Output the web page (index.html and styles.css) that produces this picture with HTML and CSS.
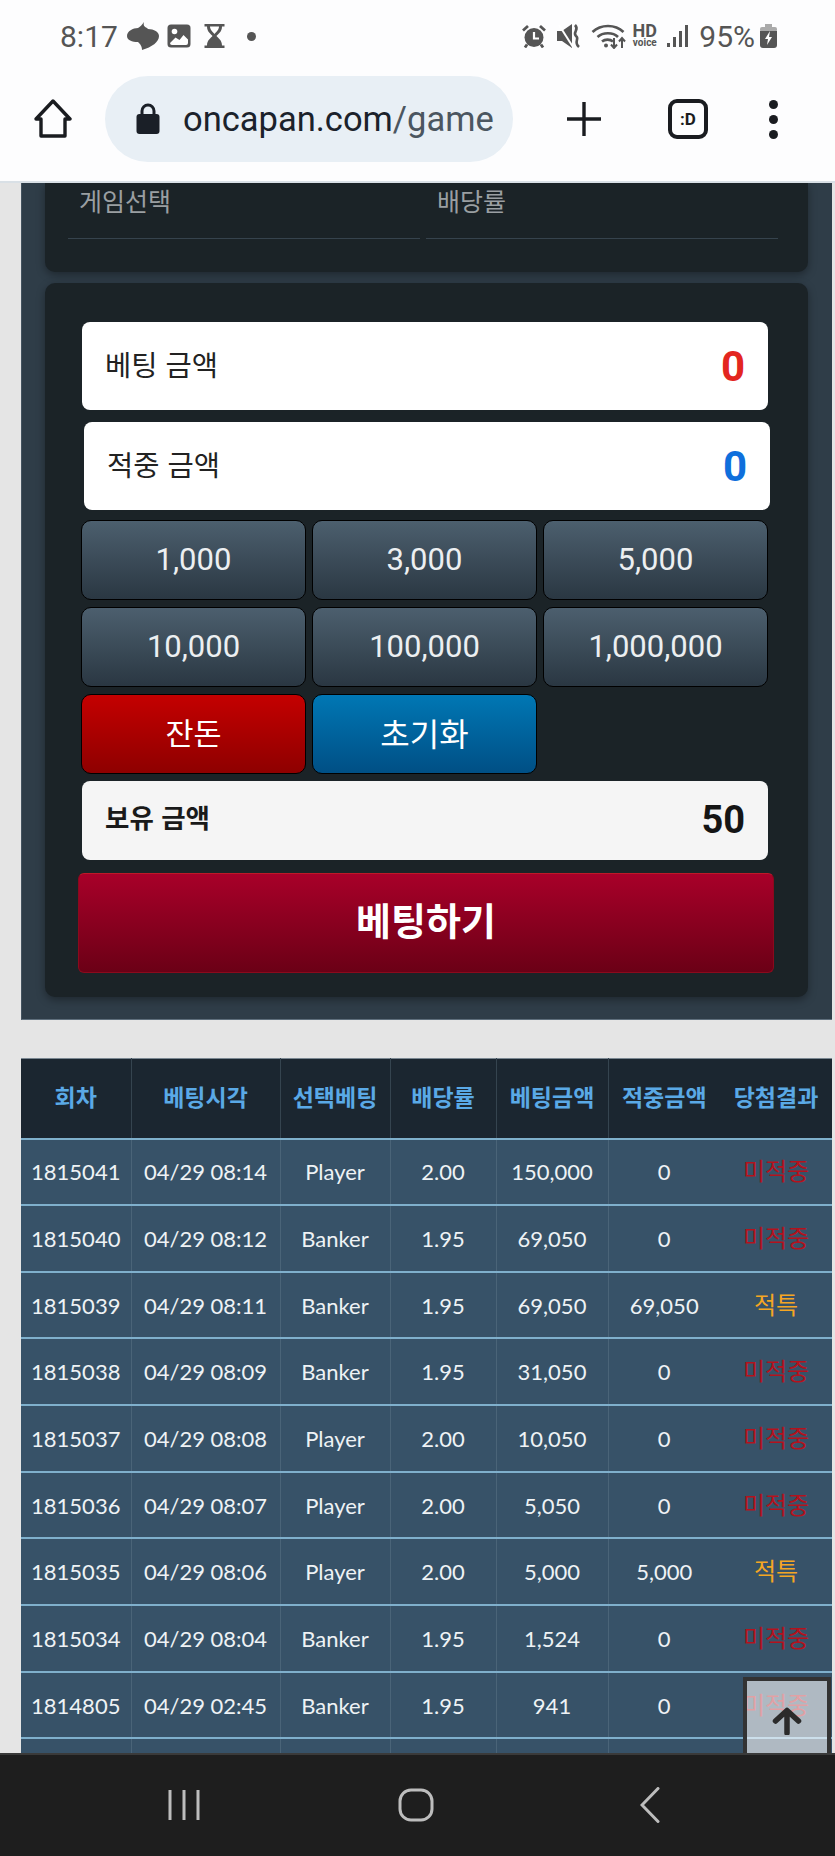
FILE: index.html
```html
<!DOCTYPE html>
<html lang="ko">
<head>
  <meta charset="UTF-8" />
  <meta name="viewport" content="width=device-width, initial-scale=1.0" />
  <title>oncapan.com/game</title>
  <link rel="stylesheet" href="styles.css">
</head>
<body>
  <div class="phone">
    <!-- Status bar -->
    <div class="status-bar">
      <div class="status-left">
        <span class="clock">8:17</span>
        <svg class="ico-talk" viewBox="0 0 32 28"><path d="M17 0 C16 3 17 5 20 6 L21 7 C27 7 32 10 32 14 C32 20 25 25 15 28 C15 25 14 23 12 21 L11 20 C5 20 0 18 0 14 C0 9 6 6 11 6 C13 5 15 3 17 0 Z" fill="#555"/></svg>
        <svg class="ico-img" viewBox="0 0 24 24"><rect x="0.500" y="0.500" width="23" height="23" rx="3.500" fill="#555"/><path d="M3 19 L8.500 13.500 L12.500 16 L16.500 11 L21 15.500 V19 Q21 21 19 21 H5 Q3 21 3 19 Z" fill="#fff"/><circle cx="7.500" cy="7.500" r="2.800" fill="#fff"/></svg>
        <svg class="ico-glass" viewBox="0 0 20 24"><path d="M0 0 H20 V2.500 H17.500 C17.500 8 13.500 10 12 12 C13.500 14 17.500 16 17.500 21.500 H20 V24 H0 V21.500 H2.500 C2.500 16 6.500 14 8 12 C6.500 10 2.500 8 2.500 2.500 H0 Z" fill="#555"/><path d="M5.500 2.500 H14.500 C14.500 6 11.500 8 10 10 C8.500 8 5.500 6 5.500 2.500 Z" fill="#fff"/></svg>
        <span class="dot"></span>
      </div>
      <div class="status-right">
        <svg class="ico-alarm" viewBox="0 0 24 24"><circle cx="12" cy="13.500" r="9.500" fill="#555"/><path d="M12 8 V14.500 H17" fill="none" stroke="#fff" stroke-width="2.200"/><path d="M1 6.500 L6 2 M23 6.500 L18 2 M5 20.500 L3 23.500 M19 20.500 L21 23.500" stroke="#555" stroke-width="2.800" fill="none"/></svg>
        <svg class="ico-mute" viewBox="0 0 24 24"><path d="M0 7 H5 L15 0 V24 L5 17 H0 Z" fill="#555"/><path d="M2 1 L16 23" stroke="#fff" stroke-width="2"/><path d="M18 1 C23 6 15 8 19 12 C23 15 16 18 22 23" fill="none" stroke="#555" stroke-width="2.600"/></svg>
        <svg class="ico-wifi" viewBox="0 0 36 26"><path d="M1.500 9 C10 1 24 1 32.500 9 M6.500 14 C12 9 22 9 27 14 M11 18.500 C14 16 19 16 22 18.500" fill="none" stroke="#555" stroke-width="2.600"/><circle cx="15" cy="22.500" r="2" fill="#555"/><path d="M23 15 V25 M20 21.500 L23 25 L26 21.500 M31 25 V15 M28 18.500 L31 15 L34 18.500" fill="none" stroke="#555" stroke-width="2"/></svg>
        <div class="hd"><span class="hd-top">HD</span><span class="hd-sub">voice</span></div>
        <svg class="ico-signal" viewBox="0 0 22 24"><rect x="0" y="19" width="3" height="4" fill="#555"/><rect x="6" y="13" width="3" height="10" fill="#555"/><rect x="12" y="7" width="3" height="16" fill="#555"/><rect x="18" y="1" width="3" height="22" fill="#555"/></svg>
        <span class="batt-text">95%</span>
        <svg class="ico-batt" viewBox="0 0 17 24"><rect x="5" y="0" width="7" height="3" fill="#aaa"/><rect x="0" y="3" width="17" height="5" rx="2" fill="#aaa"/><path d="M0 7 H17 V21 Q17 24 14 24 H3 Q0 24 0 21 Z" fill="#555"/><path d="M10 7 L5 15 H8 L7 21 L12 13 H9 Z" fill="#fff"/></svg>
      </div>
    </div>

    <!-- Browser toolbar -->
    <div class="toolbar">
      <svg class="ico-home" viewBox="0 0 40 40"><path d="M20 2 L37 20 H32 V37 H8 V20 H3 Z" fill="none" stroke="#1a1c20" stroke-width="3.400" stroke-linejoin="round"/></svg>
      <div class="url-pill">
        <svg class="ico-lock" viewBox="0 0 24 32"><rect x="0.500" y="11" width="23" height="20" rx="3" fill="#1a1f27"/><path d="M6 12 V8 A6 6 0 0 1 18 8 V12" fill="none" stroke="#1a1f27" stroke-width="3"/></svg>
        <span class="url-text">oncapan.com<span class="url-path">/game</span></span>
      </div>
      <svg class="ico-plus" viewBox="0 0 36 36"><path d="M18 1 V35 M1 18 H35" stroke="#1a1c20" stroke-width="3.400" fill="none"/></svg>
      <div class="tab-count">:D</div>
      <div class="menu-dots"><span></span><span></span><span></span></div>
    </div>

    <!-- Page -->
    <div class="content">
      <div class="panel">
        <div class="card card-top">
          <div class="field"><span class="field-label">게임선택</span></div>
          <div class="field"><span class="field-label">배당률</span></div>
        </div>

        <div class="card card-bet">
          <div class="amount-box">
            <span class="amount-label">베팅 금액</span>
            <span class="amount-value red">0</span>
          </div>
          <div class="amount-box amount-win">
            <span class="amount-label">적중 금액</span>
            <span class="amount-value blue">0</span>
          </div>

          <div class="chips">
            <button class="chip">1,000</button>
            <button class="chip">3,000</button>
            <button class="chip">5,000</button>
            <button class="chip">10,000</button>
            <button class="chip">100,000</button>
            <button class="chip">1,000,000</button>
            <button class="chip chip-red">잔돈</button>
            <button class="chip chip-blue">초기화</button>
          </div>

          <div class="balance-box">
            <span class="balance-label">보유 금액</span>
            <span class="balance-value">50</span>
          </div>
          <button class="bet-btn">베팅하기</button>
        </div>
      </div>

      <table class="history">
        <thead>
          <tr>
            <th>회차</th><th>베팅시각</th><th>선택베팅</th><th>배당률</th><th>베팅금액</th><th>적중금액</th><th>당첨결과</th>
          </tr>
        </thead>
        <tbody>
          <tr><td>1815041</td><td>04/29 08:14</td><td>Player</td><td>2.00</td><td>150,000</td><td>0</td><td class="lose">미적중</td></tr>
          <tr><td>1815040</td><td>04/29 08:12</td><td>Banker</td><td>1.95</td><td>69,050</td><td>0</td><td class="lose">미적중</td></tr>
          <tr><td>1815039</td><td>04/29 08:11</td><td>Banker</td><td>1.95</td><td>69,050</td><td>69,050</td><td class="win">적특</td></tr>
          <tr><td>1815038</td><td>04/29 08:09</td><td>Banker</td><td>1.95</td><td>31,050</td><td>0</td><td class="lose">미적중</td></tr>
          <tr><td>1815037</td><td>04/29 08:08</td><td>Player</td><td>2.00</td><td>10,050</td><td>0</td><td class="lose">미적중</td></tr>
          <tr><td>1815036</td><td>04/29 08:07</td><td>Player</td><td>2.00</td><td>5,050</td><td>0</td><td class="lose">미적중</td></tr>
          <tr><td>1815035</td><td>04/29 08:06</td><td>Player</td><td>2.00</td><td>5,000</td><td>5,000</td><td class="win">적특</td></tr>
          <tr><td>1815034</td><td>04/29 08:04</td><td>Banker</td><td>1.95</td><td>1,524</td><td>0</td><td class="lose">미적중</td></tr>
          <tr><td>1814805</td><td>04/29 02:45</td><td>Banker</td><td>1.95</td><td>941</td><td>0</td><td class="lose">미적중</td></tr>
          <tr><td></td><td></td><td></td><td></td><td></td><td></td><td></td></tr>
        </tbody>
      </table>

      <!-- Back to top -->
      <div class="to-top">
        <svg viewBox="0 0 30 28"><path d="M15 26 V4 M3.500 14 L15 3.500 L26.500 14" fill="none" stroke="#2b2b2b" stroke-width="5.500" stroke-linecap="round" stroke-linejoin="round"/></svg>
      </div>
    </div>

    <!-- Android nav bar -->
    <div class="nav-bar">
      <svg class="nav-ico nav-recent" viewBox="0 0 34 32"><path d="M3 1 V31 M17 1 V31 M31 1 V31" stroke="#bdbdbd" stroke-width="3" fill="none"/></svg>
      <svg class="nav-ico nav-home" viewBox="0 0 36 34"><rect x="2" y="2" width="32" height="30" rx="11" fill="none" stroke="#bdbdbd" stroke-width="3"/></svg>
      <svg class="nav-ico nav-back" viewBox="0 0 20 36"><path d="M18 1.500 L2 18 L18 34.500" stroke="#bdbdbd" stroke-width="3" fill="none" stroke-linecap="round"/></svg>
    </div>
  </div>
</body>
</html>
```

FILE: styles.css
```css
/* General styles */
* {
  box-sizing: border-box;
}
body {
  margin: 0;
  font-family: "Lato", "Noto Sans CJK KR", sans-serif;
  background-color: #e5e5e5;
}
button {
  font-family: inherit;
}
.phone {
  display: flex;
  flex-direction: column;
  width: 835px;
  height: 1856px;
  overflow: hidden;
}

/* Status bar */
.status-bar {
  display: flex;
  justify-content: space-between;
  align-items: center;
  height: 72px;
  padding: 0 58px 0 60px;
  background-color: #fdfdfe;
  color: #555;
  flex-shrink: 0;
}
.status-left,
.status-right {
  display: flex;
  align-items: center;
}
.clock,
.batt-text {
  font-family: "Roboto", sans-serif;
  font-size: 30px;
}
.ico-talk {
  width: 32px;
  height: 28px;
  margin-left: 9px;
}
.ico-img {
  width: 24px;
  height: 24px;
  margin-left: 8px;
}
.ico-glass {
  width: 21px;
  height: 24px;
  margin-left: 13px;
}
.dot {
  width: 9px;
  height: 9px;
  margin-left: 22px;
  border-radius: 50%;
  background-color: #555;
}
.ico-alarm,
.ico-mute {
  width: 24px;
  height: 24px;
}
.ico-mute {
  margin-left: 11px;
}
.ico-wifi {
  width: 36px;
  height: 26px;
  margin-left: 10px;
}
.hd {
  display: flex;
  flex-direction: column;
  align-items: center;
  width: 25px;
  margin-left: 5px;
  font-family: "Roboto", sans-serif;
  font-weight: 700;
  line-height: 1;
}
.hd-top {
  font-size: 18px;
  line-height: 14px;
}
.hd-sub {
  font-size: 10px;
  line-height: 10px;
}
.ico-signal {
  width: 22px;
  height: 24px;
  margin-left: 10px;
}
.batt-text {
  margin-left: 10px;
}
.ico-batt {
  width: 17px;
  height: 24px;
  margin-left: 5px;
}

/* Browser toolbar */
.toolbar {
  display: flex;
  align-items: center;
  height: 111px;
  padding: 0 0 15px 33px;
  background-color: #fdfdfe;
  border-bottom: 2px solid #d9e0e6;
  flex-shrink: 0;
}
.ico-home {
  width: 40px;
  height: 40px;
}
.url-pill {
  display: flex;
  align-items: center;
  width: 408px;
  height: 86px;
  margin-left: 32px;
  padding-left: 31px;
  border-radius: 43px;
  background-color: #e8eff5;
}
.ico-lock {
  width: 24px;
  height: 32px;
}
.url-text {
  margin-left: 23px;
  font-family: "Roboto", sans-serif;
  font-size: 34.500px;
  white-space: nowrap;
  color: #1b222b;
}
.url-path {
  color: #4b5660;
}
.ico-plus {
  width: 36px;
  height: 36px;
  margin-left: 53px;
}
.tab-count {
  display: flex;
  align-items: center;
  justify-content: center;
  width: 40px;
  height: 40px;
  margin-left: 66px;
  border: 4px solid #1a1c20;
  border-radius: 9px;
  font-family: "Roboto", sans-serif;
  font-size: 17px;
  font-weight: 700;
  color: #1a1c20;
}
.menu-dots {
  display: flex;
  flex-direction: column;
  gap: 6px;
  margin-left: 61px;
}
.menu-dots span {
  width: 9px;
  height: 9px;
  border-radius: 50%;
  background-color: #1a1c20;
}

/* Page */
.content {
  position: relative;
  flex: 1;
  overflow: hidden;
  background-color: #e5e5e5;
}
.panel {
  width: 811px;
  height: 837px;
  margin-left: 21px;
  padding: 0 24px 0 23px;
  background-color: #2f3d48;
  border-bottom: 1px solid #5f6f7c;
  border-left: 1px solid #44535f;
}
.card {
  background-color: #1b2327;
  box-shadow: 0 3px 8px rgba(0, 0, 0, 0.35);
}
.card-top {
  display: grid;
  grid-template-columns: 352px 352px;
  gap: 6px;
  height: 89px;
  padding: 0 23px;
  border-radius: 0 0 10px 10px;
}
.field {
  height: 56px;
  padding: 0 0 0 11px;
  border-bottom: 1px solid #36434d;
}
.field-label {
  display: block;
  font-family: "Noto Sans CJK KR", sans-serif;
  font-size: 25px;
  line-height: 34px;
  color: #9a9fa2;
}
.card-bet {
  height: 714px;
  margin-top: 11px;
  padding: 39px 40px 0 37px;
  border-radius: 10px;
}

/* Amount boxes */
.amount-box {
  display: flex;
  justify-content: space-between;
  align-items: center;
  height: 88px;
  padding: 0 23px;
  background-color: #fff;
  border-radius: 8px;
}
.amount-win {
  position: relative;
  left: 2px;
  margin-top: 12px;
}
.amount-label {
  margin-bottom: 6px;
  font-family: "Noto Sans CJK KR", sans-serif;
  font-size: 28.500px;
  color: #222;
}
.amount-value {
  font-family: "Roboto", sans-serif;
  font-size: 42px;
  font-weight: 700;
}
.red {
  color: #e3261f;
}
.blue {
  color: #0f6fdc;
}

/* Chip buttons */
.chips {
  display: grid;
  grid-template-columns: repeat(3, 225px);
  grid-auto-rows: 80px;
  gap: 7px 6px;
  margin: 10px 0 0 -1px;
}
.chip {
  padding: 0 0 2px;
  border: 1px solid #000;
  border-radius: 10px;
  background: linear-gradient(#4c5f6e, #2a3742);
  font-family: "Roboto", sans-serif;
  font-size: 31px;
  color: #eceff1;
}
.chip-red {
  padding-bottom: 5px;
  background: linear-gradient(#c40000, #8e0000);
  font-family: "Noto Sans CJK KR", sans-serif;
  font-size: 30.500px;
  color: #fff;
}
.chip-blue {
  padding-bottom: 5px;
  background: linear-gradient(#0077b4, #004f85);
  font-family: "Noto Sans CJK KR", sans-serif;
  font-size: 32px;
  color: #fff;
}

/* Balance and bet button */
.balance-box {
  display: flex;
  justify-content: space-between;
  align-items: center;
  height: 79px;
  margin-top: 7px;
  padding: 0 23px;
  background-color: #f5f5f5;
  border-radius: 8px;
}
.balance-label {
  margin-bottom: 8px;
  font-family: "Noto Sans CJK KR", sans-serif;
  font-size: 26.500px;
  font-weight: 700;
  color: #1a1a1a;
}
.balance-value {
  margin-bottom: 2px;
  font-family: "Roboto", sans-serif;
  font-size: 38px;
  font-weight: 700;
  color: #151515;
}
.bet-btn {
  display: block;
  width: 696px;
  height: 100px;
  margin: 13px 0 0 -4px;
  padding: 0 0 9px;
  border: 1px solid #8a0a1c;
  border-top-color: #c01828;
  border-radius: 6px;
  background: linear-gradient(#a80029, #6b0016);
  font-family: "Noto Sans CJK KR", sans-serif;
  font-size: 38px;
  font-weight: 700;
  color: #fff;
}

/* History table */
.history {
  width: 811px;
  margin: 38px 0 0 21px;
  border-collapse: collapse;
  table-layout: fixed;
  font-size: 22px;
  color: #eef2f5;
}
.history th {
  height: 80px;
  padding: 0 0 5px;
  background-color: #1b2630;
  border-top: 1px solid #7a8791;
  border-right: 1px solid #35444f;
  font-family: "Noto Sans CJK KR", sans-serif;
  font-size: 23px;
  font-weight: 700;
  color: #5aa9e6;
}
.history td {
  height: 66.670px;
  padding: 0;
  background-color: #375268;
  border-top: 2px solid #7fb0cc;
  border-right: 1px solid #4a6478;
  text-align: center;
}
.history th:nth-child(1) { width: 110px; }
.history th:nth-child(2) { width: 149px; }
.history th:nth-child(3) { width: 110px; }
.history th:nth-child(4) { width: 106px; }
.history th:nth-child(5) { width: 112px; }
.history th:nth-child(6) { width: 112px; }
.history th:nth-child(6),
.history th:nth-child(7),
.history td:nth-child(6),
.history td:nth-child(7) {
  border-right: 0;
}
.history .lose {
  padding-bottom: 4px;
  font-family: "Noto Sans CJK KR", sans-serif;
  font-size: 24px;
  color: #b3121d;
}
.history .win {
  padding-bottom: 4px;
  font-family: "Noto Sans CJK KR", sans-serif;
  font-size: 24px;
  color: #f5a623;
}

/* Back to top button */
.to-top {
  position: absolute;
  right: 4px;
  bottom: -10px;
  display: flex;
  justify-content: center;
  width: 88px;
  height: 86px;
  padding-top: 26px;
  background-color: rgba(255, 255, 255, 0.6);
  border: 4px solid #333;
}
.to-top svg {
  width: 30px;
  height: 28px;
}

/* Android nav bar */
.nav-bar {
  display: flex;
  align-items: center;
  height: 103px;
  padding-bottom: 2px;
  background-color: #1e1e1e;
  border-top: 2px solid #3a3a3a;
  flex-shrink: 0;
}
.nav-recent {
  width: 34px;
  height: 32px;
  margin-left: 167px;
}
.nav-home {
  width: 36px;
  height: 34px;
  margin-left: 197px;
}
.nav-back {
  width: 20px;
  height: 36px;
  margin-left: 206px;
}
```
